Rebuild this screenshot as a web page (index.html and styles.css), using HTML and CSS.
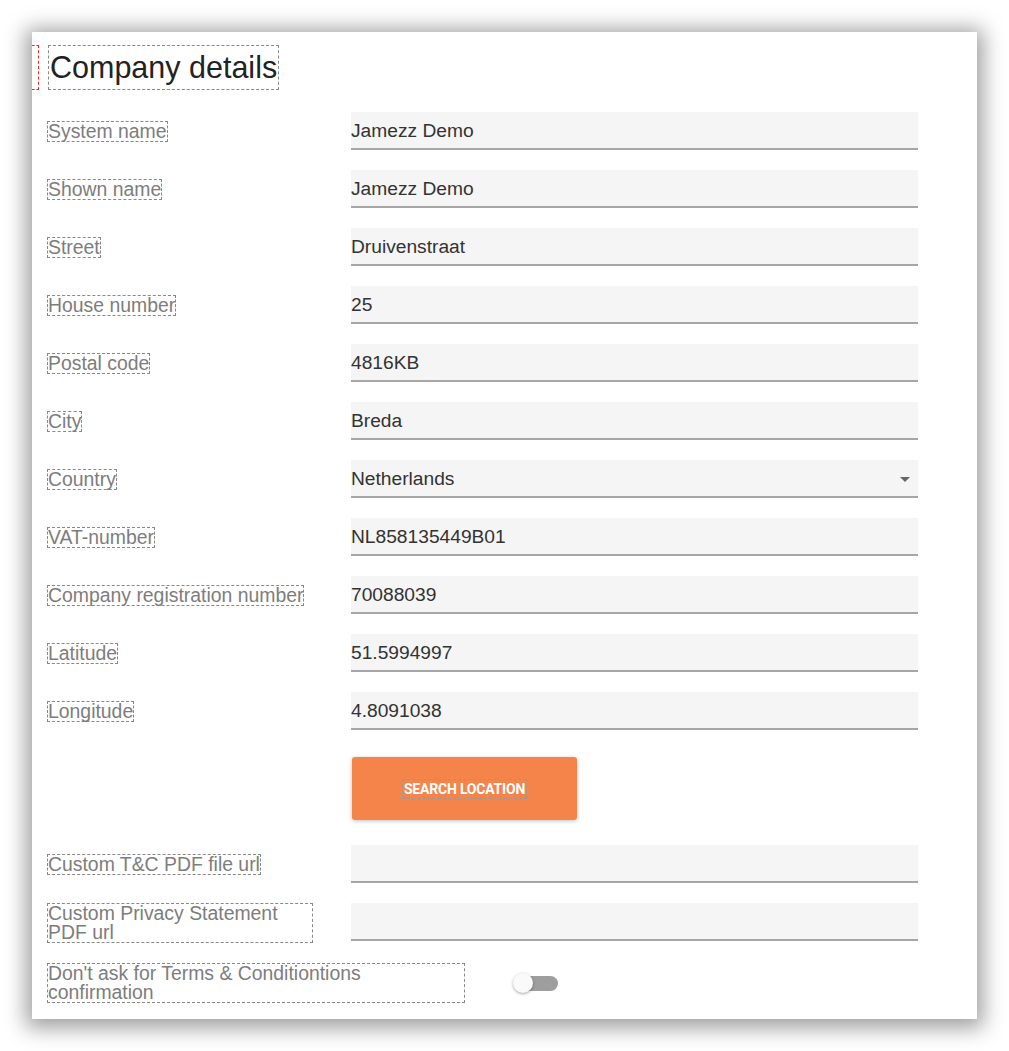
FILE: index.html
```html
<!DOCTYPE html>
<html>
<head>
<meta charset="utf-8">
<link rel="stylesheet" href="styles.css">
</head>
<body>
<div class="card">
  <div class="title-row">
    <span class="marker"></span>
    <h1 class="title">Company details</h1>
  </div>
  <div class="rows">
    <div class="row"><div class="label-col"><span class="label">System name</span></div><div class="field"><span class="value">Jamezz Demo</span></div></div>
    <div class="row"><div class="label-col"><span class="label">Shown name</span></div><div class="field"><span class="value">Jamezz Demo</span></div></div>
    <div class="row"><div class="label-col"><span class="label">Street</span></div><div class="field"><span class="value">Druivenstraat</span></div></div>
    <div class="row"><div class="label-col"><span class="label">House number</span></div><div class="field"><span class="value">25</span></div></div>
    <div class="row"><div class="label-col"><span class="label">Postal code</span></div><div class="field"><span class="value">4816KB</span></div></div>
    <div class="row"><div class="label-col"><span class="label">City</span></div><div class="field"><span class="value">Breda</span></div></div>
    <div class="row"><div class="label-col"><span class="label">Country</span></div><div class="field select"><span class="value">Netherlands</span><span class="arrow"></span></div></div>
    <div class="row"><div class="label-col"><span class="label">VAT-number</span></div><div class="field"><span class="value">NL858135449B01</span></div></div>
    <div class="row"><div class="label-col"><span class="label">Company registration number</span></div><div class="field"><span class="value">70088039</span></div></div>
    <div class="row"><div class="label-col"><span class="label">Latitude</span></div><div class="field"><span class="value">51.5994997</span></div></div>
    <div class="row"><div class="label-col"><span class="label">Longitude</span></div><div class="field"><span class="value">4.8091038</span></div></div>
  </div>
  <div class="button-row">
    <button class="btn"><span class="btn-text">SEARCH LOCATION</span></button>
  </div>
  <div class="rows">
    <div class="row"><div class="label-col"><span class="label">Custom T&amp;C PDF file url</span></div><div class="field"></div></div>
    <div class="row tight"><div class="label-col"><span class="label">Custom Privacy Statement PDF url</span></div><div class="field"></div></div>
  </div>
  <div class="toggle-row">
    <span class="label wide">Don't ask for Terms &amp; Conditiontions confirmation</span>
    <span class="switch"><span class="track"></span><span class="thumb"></span></span>
  </div>
</div>
</body>
</html>
```

FILE: styles.css
```css
html, body {
  margin: 0;
  padding: 0;
  background: #ffffff;
}
body {
  padding: 32px 32px 32px 32px;
  min-height: 1051px;
  box-sizing: border-box;
  font-family: "Liberation Sans", Arial, sans-serif;
}
.card {
  width: 945px;
  height: 987px;
  box-sizing: border-box;
  background: #ffffff;
  box-shadow: 0 3px 20px 6px rgba(0,0,0,0.38);
  padding: 13px 0 0 15px;
  overflow: hidden;
}
.title-row {
  display: flex;
  align-items: stretch;
  height: 45px;
}
.marker {
  width: 6px;
  margin-left: -15px;
  margin-right: 9px;
  border: 1px dashed #ff2020;
  border-left: none;
}
.title {
  margin: 0;
  font-weight: normal;
  font-size: 30.5px;
  line-height: 43px;
  color: #222;
  border: 1px dashed #888;
  padding: 0 1px;
}
.rows {
  display: flex;
  flex-direction: column;
  gap: 20px;
  margin-top: 22px;
}
.row {
  display: grid;
  grid-template-columns: 304px 567px;
  height: 38px;
}
.label-col {
  padding-top: 9px;
}
.row.tight .label-col {
  padding-top: 0;
}
.label {
  display: inline-block;
  max-width: 266px;
  box-sizing: border-box;
  border: 1px dashed #888;
  font-size: 19.4px;
  line-height: 19px;
  color: #7d7d7d;
}
.field {
  background: #f5f5f5;
  border-bottom: 2px solid #a6a6a6;
  box-sizing: border-box;
  height: 38px;
  display: flex;
  align-items: center;
  position: relative;
}
.value {
  font-size: 19.2px;
  color: #333;
  padding-top: 1px;
}
.select .arrow {
  position: absolute;
  right: 8px;
  top: 17px;
  width: 0;
  height: 0;
  border-left: 5px solid transparent;
  border-right: 5px solid transparent;
  border-top: 5px solid #666;
}
.button-row {
  padding-left: 305px;
  margin-top: 27px;
}
.btn {
  width: 225px;
  height: 63px;
  background: #f5844a;
  border: none;
  border-radius: 3px;
  box-shadow: 0 1px 4px rgba(0,0,0,0.25);
  display: flex;
  align-items: center;
  justify-content: center;
  padding: 0;
  font-family: Roboto, "Liberation Sans", Arial, sans-serif;
}
.btn-text {
  color: #fff;
  font-weight: bold;
  font-size: 14px;
  line-height: 18px;
  border: 1px dashed #999;
  padding: 0 1px;
  letter-spacing: -0.2px;
}
.button-row + .rows {
  margin-top: 25px;
}
.toggle-row {
  display: flex;
  align-items: center;
  margin-top: 22px;
}
.label.wide {
  max-width: none;
  width: 418px;
}
.switch {
  position: relative;
  width: 46px;
  height: 20px;
  margin-left: 48px;
}
.track {
  position: absolute;
  left: 8px;
  top: 3px;
  width: 37px;
  height: 15px;
  border-radius: 8px;
  background: #9e9e9e;
}
.thumb {
  position: absolute;
  left: 0;
  top: 0;
  width: 20px;
  height: 20px;
  border-radius: 50%;
  background: #fafafa;
  box-shadow: 0 1px 3px rgba(0,0,0,0.35);
}
```
